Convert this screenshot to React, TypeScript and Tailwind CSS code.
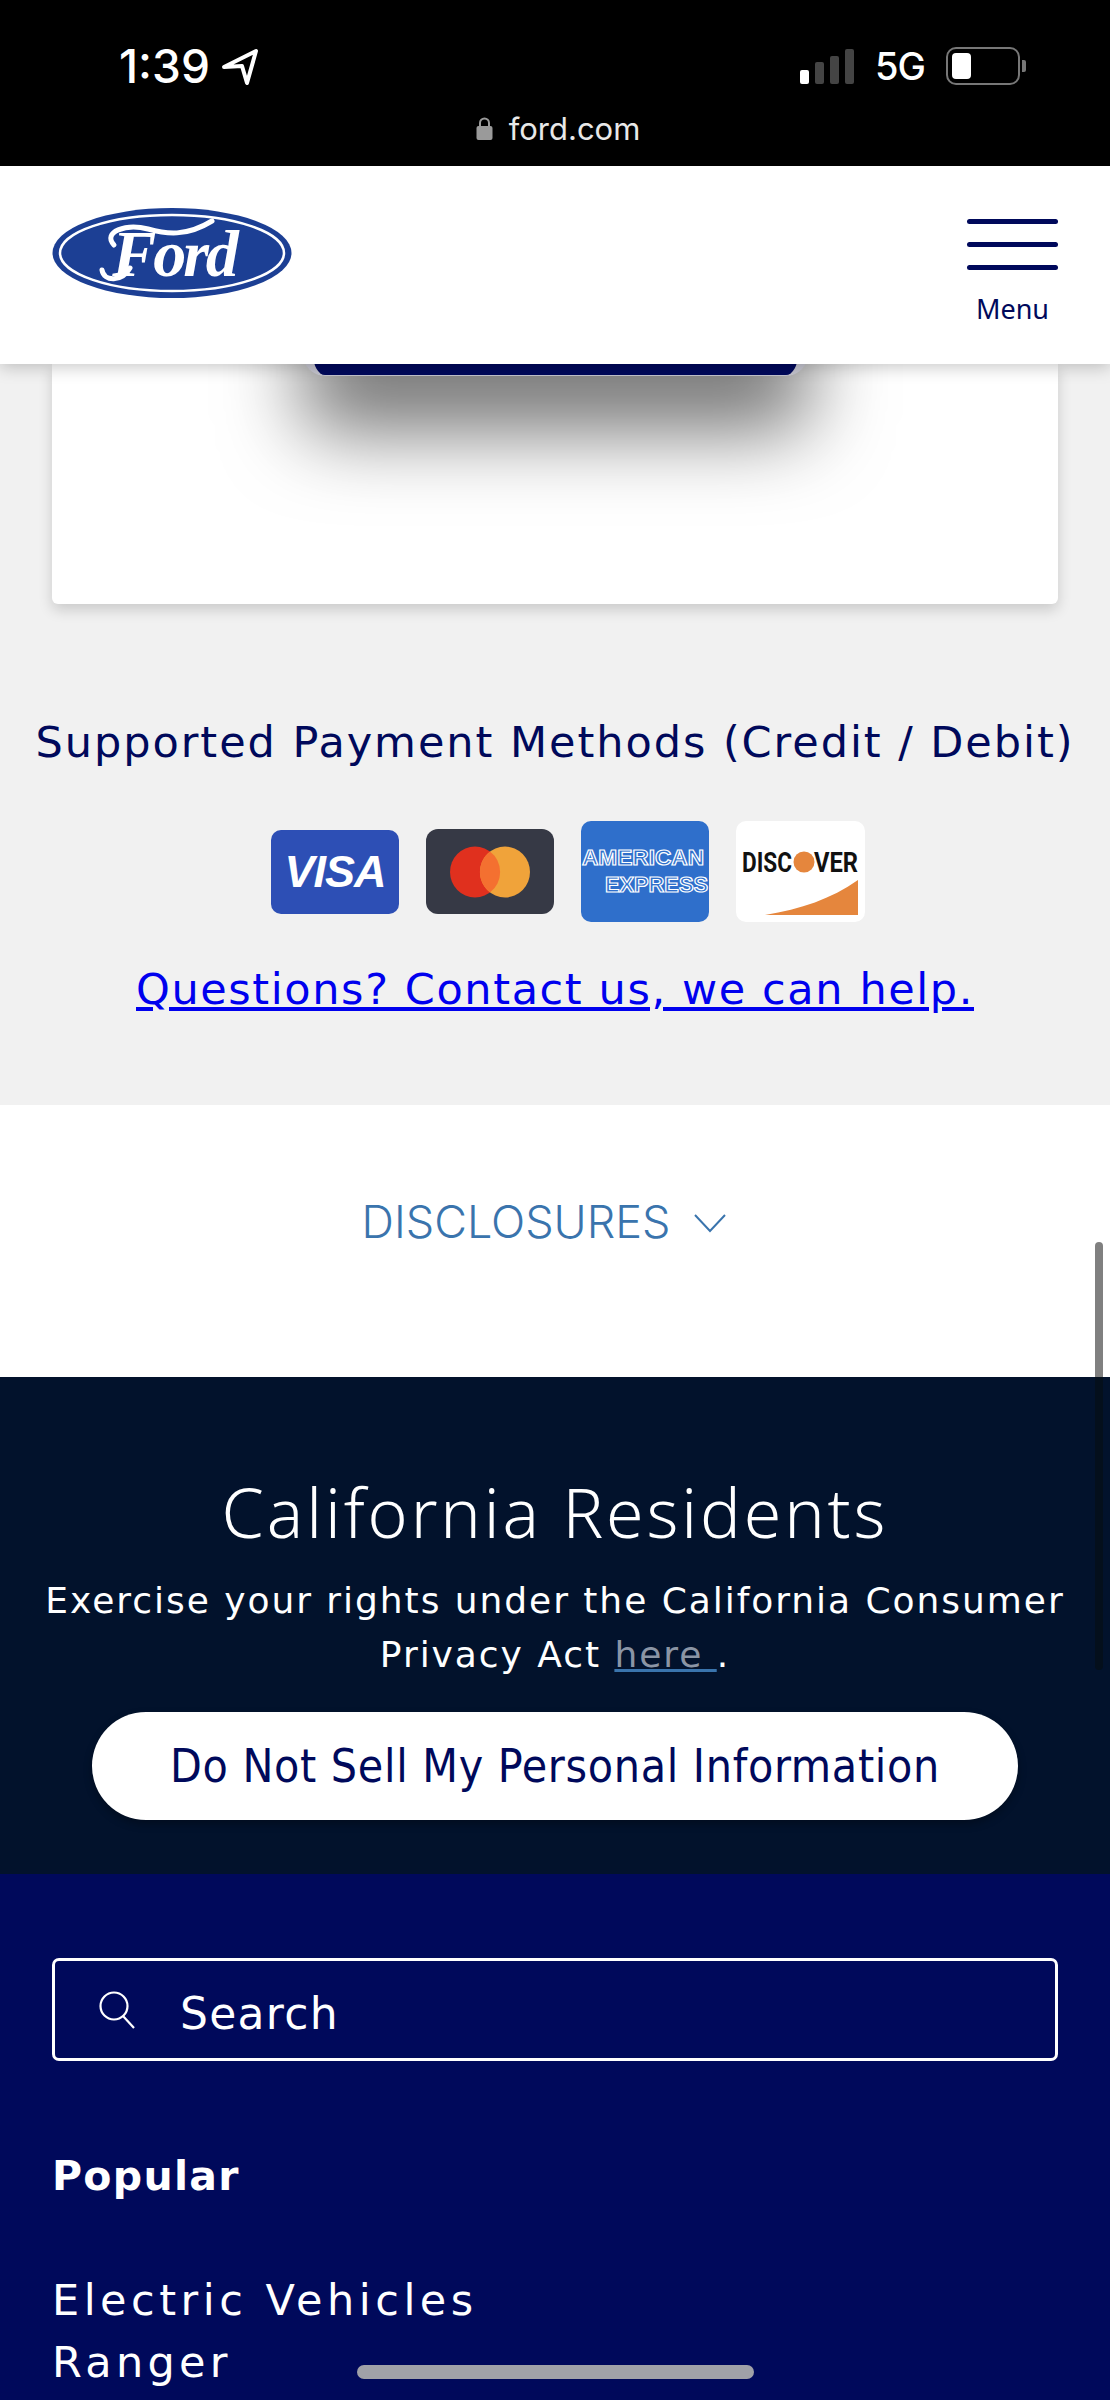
const FordLogo = () => (
  <svg width="240" height="90" viewBox="0 0 240 90">
    <ellipse cx="120" cy="45" rx="119.5" ry="45" fill="#1c3f94" />
    <ellipse cx="120" cy="45" rx="112" ry="38" fill="none" stroke="#fff" strokeWidth="2.5" />
    <path d="M62 37C50 24 74 15 96 21C114 26 134 29 160 13" fill="none" stroke="#fff" strokeWidth="5" strokeLinecap="round" />
    <path d="M50 62C52 74 70 74 78 60" fill="none" stroke="#fff" strokeWidth="5" strokeLinecap="round" />
    <text x="122" y="68" textAnchor="middle" fill="#fff" fontFamily="'Liberation Serif', serif" fontStyle="italic" fontWeight="700" fontSize="66" letterSpacing="-3">
      Ford
    </text>
  </svg>
);

const VisaCard = () => (
  <div className="w-[128px] h-[84px] rounded-[10px] bg-[#2d4fb5] flex items-center justify-center">
    <span className="font-['Liberation_Sans',sans-serif] font-bold italic text-[45px] leading-none text-white tracking-[-1px]">VISA</span>
  </div>
);

const MasterCard = () => (
  <div className="w-[128px] h-[85px] rounded-[12px] bg-[#363945] flex items-center justify-center">
    <svg width="80" height="52" viewBox="0 0 80 52">
      <ellipse cx="25" cy="26" rx="25" ry="25.5" fill="#e0301e" />
      <ellipse cx="55" cy="26" rx="25" ry="25.5" fill="#f0a33a" />
      <path d="M40 5.5a25 25.5 0 0 1 0 41a25 25.5 0 0 1 0-41z" fill="#f47030" />
    </svg>
  </div>
);

const AmexCard = () => (
  <div className="w-[128px] h-[101px] rounded-[10px] bg-[#2f6fcb]">
    <svg width="128" height="101" viewBox="0 0 128 101">
      <text x="1" y="44" fill="#2f6fcb" stroke="#fff" strokeWidth="1.2" fontFamily="'Liberation Sans', sans-serif" fontWeight="700" fontSize="22" textLength="122" lengthAdjust="spacingAndGlyphs">AMERICAN</text>
      <text x="24" y="71" fill="#2f6fcb" stroke="#fff" strokeWidth="1.2" fontFamily="'Liberation Sans', sans-serif" fontWeight="700" fontSize="21.5" textLength="103" lengthAdjust="spacingAndGlyphs">EXPRESS</text>
    </svg>
  </div>
);

const DiscoverCard = () => (
  <div className="w-[129px] h-[101px] rounded-[10px] bg-white">
    <svg width="129" height="101" viewBox="0 0 129 101">
      <circle cx="68" cy="41" r="10.5" fill="#e5863d" />
      <text x="6" y="51" fill="#111" fontFamily="'Roboto', sans-serif" fontWeight="700" fontSize="28" textLength="50" lengthAdjust="spacingAndGlyphs">DISC</text>
      <text x="78" y="51" fill="#111" fontFamily="'Roboto', sans-serif" fontWeight="700" fontSize="28" textLength="44" lengthAdjust="spacingAndGlyphs">VER</text>
      <path d="M29 94C65 88 95 78 122 59V94z" fill="#e5863d" />
    </svg>
  </div>
);

export default function App() {
  return (
    <div className="relative h-[2400px] w-[1110px] overflow-hidden bg-white font-['DejaVu_Sans',sans-serif]">
      {/* phone status bar + url */}
      <div className="h-[166px] bg-black text-white px-[119px] pt-[41px] font-['Inter',sans-serif]">
        <div className="flex items-center h-[50px]">
          <span className="text-[46px] leading-none font-medium">1:39</span>
          <svg className="ml-[12px]" width="37" height="37" viewBox="0 0 37 37">
            <path d="M2 19 34 3 25 35 20 18z" fill="none" stroke="#fff" strokeWidth="4" strokeLinejoin="round" />
          </svg>
          <div className="ml-auto flex items-end gap-[6px] h-[36px] mr-[21px]">
            <div className="w-[9px] h-[14px] rounded-[2px] bg-white" />
            <div className="w-[9px] h-[22px] rounded-[2px] bg-[#444]" />
            <div className="w-[9px] h-[28px] rounded-[2px] bg-[#444]" />
            <div className="w-[9px] h-[35px] rounded-[2px] bg-[#444]" />
          </div>
          <span className="text-[38px] leading-none font-medium tracking-[-1px] mr-[21px]">5G</span>
          <div className="flex items-center mr-[-35px]">
            <div className="w-[74px] h-[38px] rounded-[10px] border-[2px] border-[#777] p-[4px]">
              <div className="w-[19px] h-full rounded-[4px] bg-white" />
            </div>
            <div className="ml-[2px] w-[4px] h-[12px] rounded-r-[2px] bg-[#777]" />
          </div>
        </div>
        <div className="mt-[22px] flex items-center justify-center gap-[16px] ml-[6px]">
          <svg width="17" height="23" viewBox="0 0 17 23">
            <path d="M4 10V6a4.5 4.5 0 0 1 9 0v4" fill="none" stroke="#9a9a9a" strokeWidth="2" />
            <rect x="0.5" y="9" width="16" height="14" rx="2" fill="#9a9a9a" />
          </svg>
          <span className="text-[31px] leading-none text-[#e8e8e8]">ford.com</span>
        </div>
      </div>

      {/* ford header */}
      <header className="relative z-10 h-[198px] bg-white px-[52px] flex justify-between shadow-[0_3px_16px_rgba(0,0,0,0.22)]">
        <div className="pt-[42px]">
          <FordLogo />
        </div>
        <div className="pt-[53px] w-[91px] flex flex-col items-center">
          <div className="w-[91px] flex flex-col gap-[18px]">
            <div className="h-[5px] rounded-full bg-[#00095b]" />
            <div className="h-[5px] rounded-full bg-[#00095b]" />
            <div className="h-[5px] rounded-full bg-[#00095b]" />
          </div>
          <span className="mt-[25px] text-[27px] leading-none text-[#00095b] whitespace-nowrap font-['Noto_Sans',sans-serif]">Menu</span>
        </div>
      </header>

      {/* payment section */}
      <section className="h-[741px] bg-[#f1f1f1] px-[52px]">
        <div className="h-[240px] bg-white rounded-b-[6px] shadow-[0_6px_14px_rgba(0,0,0,0.16)] flex justify-center">
          <div className="-mt-[100px] w-[505px] h-[112px] rounded-b-[22px] border-x-[10px] border-b-[1px] border-[#c4c4ce] bg-[#00095b] shadow-[0_55px_80px_rgba(0,0,0,0.55)]" />
        </div>
        <p className="mt-[112px] -mx-[52px] text-center text-[43px] leading-[52px] tracking-[1.95px] text-[#00095b] whitespace-nowrap">
          Supported Payment Methods (Credit / Debit)
        </p>
        <div className="mt-[53px] ml-[26px] flex items-center justify-center gap-[27px] h-[101px]">
          <VisaCard />
          <MasterCard />
          <AmexCard />
          <DiscoverCard />
        </div>
        <a className="mt-[41px] block text-center text-[43px] leading-[52px] tracking-[1.6px] text-[#0000ee] underline whitespace-nowrap">
          Questions? Contact us, we can help.
        </a>
      </section>

      {/* disclosures */}
      <section className="h-[272px] pt-[87px] flex justify-center items-start gap-[24px] mr-[22px] bg-white">
        <span className="text-[45px] leading-[60px] font-light font-['Inter',sans-serif] text-[#3a74ad]">DISCLOSURES</span>
        <svg className="mt-[21px]" width="32" height="20" viewBox="0 0 32 20">
          <path d="M1 2 16 18 31 2" fill="none" stroke="#3a74ad" strokeWidth="2" />
        </svg>
      </section>

      {/* california */}
      <section className="h-[497px] bg-[#02122c] text-white text-center pt-[93px]">
        <h2 className="text-[68px] leading-[84px] font-light font-['Noto_Sans',sans-serif] tracking-[2.9px] whitespace-nowrap">California Residents</h2>
        <p className="mt-[20px] text-[36px] leading-[54px] tracking-[1.95px] whitespace-nowrap">
          Exercise your rights under the California Consumer
          <br />
          Privacy Act <a className="underline decoration-[#3a74ad] text-[#8b95a5]">here </a>.
        </p>
        <button className="mt-[30px] mx-auto flex items-center justify-center w-[926px] h-[108px] rounded-full bg-white text-[#00095b] text-[46px] font-['DejaVu_Sans_Condensed','DejaVu_Sans',sans-serif] [font-stretch:condensed] tracking-[0.7px] shadow-[0_4px_8px_rgba(0,0,0,0.3)]">
          Do Not Sell My Personal Information
        </button>
      </section>

      {/* footer */}
      <footer className="h-[526px] bg-[#00095b] px-[52px] pt-[84px] text-white">
        <div className="h-[103px] border-[3px] border-white rounded-[7px] flex items-center pl-[42px]">
          <svg width="40" height="38" viewBox="0 0 40 38">
            <circle cx="17" cy="15" r="13.5" fill="none" stroke="#fff" strokeWidth="2.2" />
            <path d="M26 25 37 37" fill="none" stroke="#fff" strokeWidth="2.2" />
          </svg>
          <span className="ml-[43px] text-[44px] leading-none tracking-[1.3px] mt-[8px]">Search</span>
        </div>
        <h3 className="mt-[89px] text-[41px] leading-[52px] font-bold tracking-[1.3px]">Popular</h3>
        <p className="mt-[67px] text-[43px] leading-[62px] tracking-[4.5px]">Electric Vehicles</p>
        <p className="text-[43px] leading-[62px] tracking-[4.3px]">Ranger</p>
      </footer>

      {/* overlays */}
      <div className="absolute left-[1095px] top-[1242px] h-[135px] w-[8px] rounded-t-full bg-[#808080]" />
      <div className="absolute left-[1095px] top-[1377px] h-[293px] w-[8px] rounded-b-full bg-[#040f1c]" />
      <div className="absolute left-[357px] top-[2365px] h-[14px] w-[397px] rounded-full bg-[#a0a1a8]" />
    </div>
  );
}
